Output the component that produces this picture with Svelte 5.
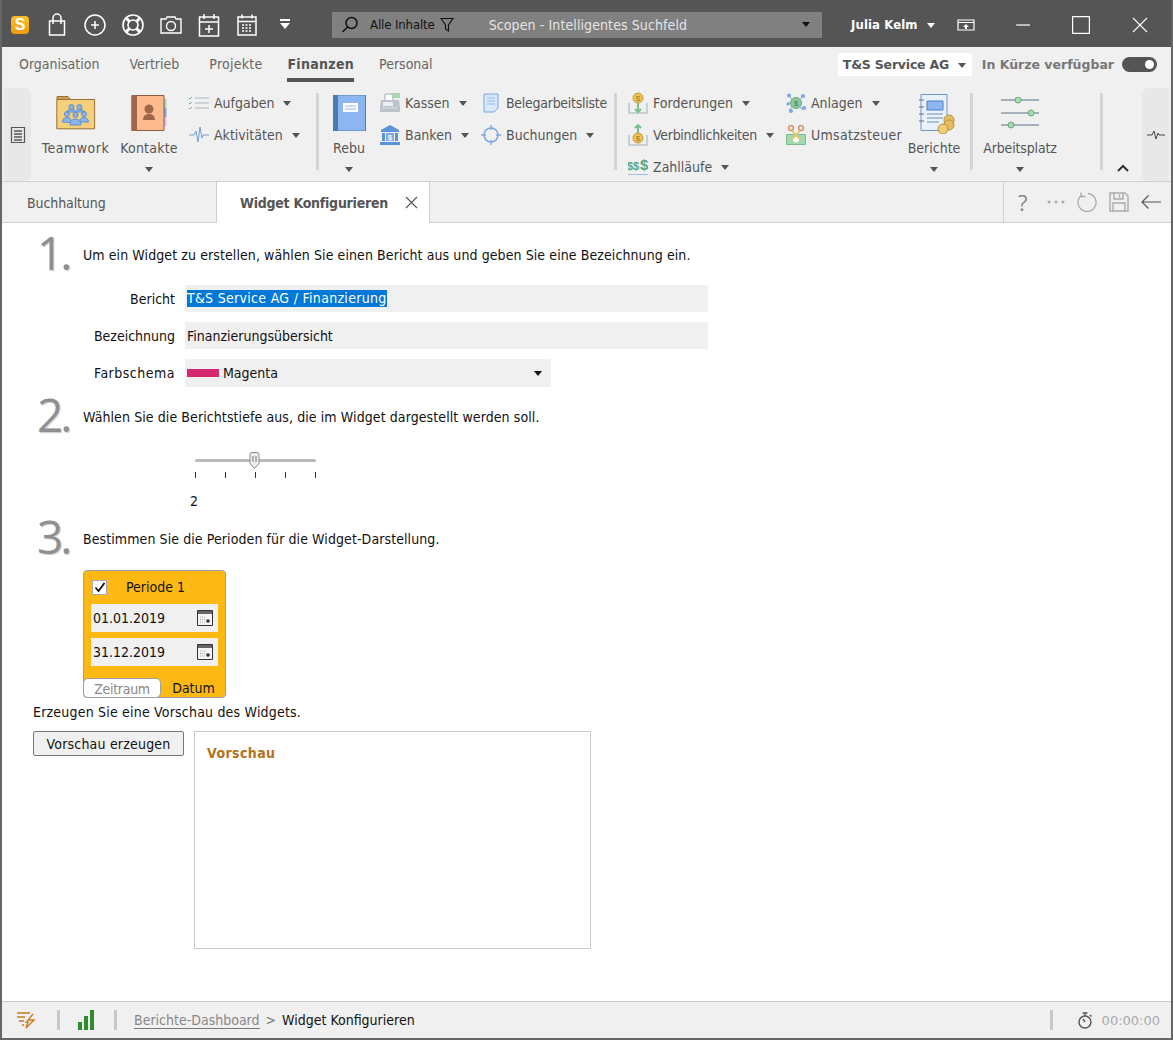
<script>
  const tabs = ['Organisation', 'Vertrieb', 'Projekte', 'Finanzen', 'Personal'];
  const ticks = [0, 1, 2, 3, 4];
  let periodeAktiv = $state(true);
</script>

<div class="window">
  <header class="titlebar">
    <div class="logo">S</div>
    <div class="quick">
      <svg width="24" height="24" viewBox="0 0 24 24" fill="none" stroke="#fff" stroke-width="1.5"><path d="M4.5 8h15v14h-15z"/><path d="M8 11V5a4 4 0 0 1 8 0v6"/></svg>
      <svg width="24" height="24" viewBox="0 0 24 24" fill="none" stroke="#fff" stroke-width="1.5"><circle cx="12" cy="12" r="10"/><path d="M8 12h8M12 8v8"/></svg>
      <svg width="24" height="24" viewBox="0 0 24 24" fill="none" stroke="#fff" stroke-width="1.6"><circle cx="12" cy="12" r="10"/><circle cx="12" cy="12" r="5"/><path d="M5 5l3.5 3.5M19 5l-3.5 3.5M5 19l3.5-3.5M19 19l-3.5-3.5" stroke-width="3"/></svg>
      <svg width="24" height="24" viewBox="0 0 24 24" fill="none" stroke="#fff" stroke-width="1.4"><path d="M2 6h5l1-2h8l1 2h5v14H2z"/><circle cx="12" cy="13" r="4.5"/></svg>
      <svg width="24" height="24" viewBox="0 0 24 24" fill="none" stroke="#fff" stroke-width="1.5"><path d="M2.5 4h19v19h-19zM2.5 9h19M7 1v5M17 1v5M12 12v8M8 16h8"/></svg>
      <svg width="24" height="24" viewBox="0 0 24 24" fill="none" stroke="#fff" stroke-width="1.5"><path d="M3 4h18v18H3zM3 8.5h18M7 1.5v4M17 1.5v4"/><path d="M7 12h10M7 15h10M7 18h10" stroke-dasharray="2 1.5" stroke-width="1.3"/></svg>
      <svg width="24" height="24" viewBox="0 0 24 24" fill="#fff"><path d="M7 6h10v2H7zM7 10h10l-5 6z"/></svg>
    </div>
    <div class="search">
      <svg class="lens" width="20" height="20" viewBox="0 0 20 20" fill="none" stroke="#111" stroke-width="1.5"><circle cx="11.5" cy="8" r="5.5"/><path d="M7.5 12l-5 5"/></svg>
      <span class="scope">Alle Inhalte</span>
      <svg class="filter" width="14" height="16" viewBox="0 0 14 16" fill="none" stroke="#111" stroke-width="1.2"><path d="M1 1.5h12L8.5 8v6l-3-2V8z"/></svg>
      <span class="hint">Scopen - Intelligentes Suchfeld</span>
      <span class="caret dark"></span>
    </div>
    <div class="user">Julia Kelm <span class="caret white"></span></div>
    <svg class="screen" width="18" height="12" viewBox="0 0 18 12" fill="none" stroke="#fff" stroke-width="1.2"><path d="M1 1h16v10H1zM1 3.5h16"/><path d="M9 5l-3 3h2v2h2V8h2z" fill="#fff" stroke="none"/></svg>
    <div class="winbtns">
      <svg width="18" height="18" viewBox="0 0 18 18" stroke="#fff" stroke-width="1.2"><path d="M2 9h14"/></svg>
      <svg width="18" height="18" viewBox="0 0 18 18" fill="none" stroke="#fff" stroke-width="1.2"><path d="M.6.6h16.8v16.8H.6z"/></svg>
      <svg width="16" height="16" viewBox="0 0 16 16" stroke="#fff" stroke-width="1.1"><path d="M1 1l14 14M15 1L1 15"/></svg>
    </div>
  </header>

  <nav class="navrow">
    {#each tabs as t}
      <span class="navtab" class:active={t === 'Finanzen'} class:tight={t === 'Projekte'}>{t}</span>
    {/each}
    <div class="navright">
      <div class="company">T&amp;S Service AG <span class="caret gray"></span></div>
      <span class="soon">In Kürze verfügbar</span>
      <div class="switch"><span></span></div>
    </div>
  </nav>

  <section class="ribbon">
    <div class="pane left">
      <svg width="16" height="18" viewBox="0 0 16 18" fill="none" stroke="#555" stroke-width="1.2"><path d="M1.5 1.5h13v15h-13z"/><path d="M4 5h8M4 8h8M4 11h8M4 14h8" stroke-width="1.4"/></svg>
    </div>

    <div class="big teamwork">
      <svg class="bigicon" width="40" height="36" viewBox="0 0 40 36"><path d="M1 4.5V1.5h11l2.5 3z" fill="#c9a050" stroke="#96703a"/><path d="M.8 4.5h37.8v29.3H.8z" fill="#f6cf7b" stroke="#96703a"/><g fill="#8db5ea" stroke="#5d8fd2"><circle cx="15.5" cy="12" r="2.5"/><circle cx="23.5" cy="12" r="2.5"/><circle cx="11" cy="19" r="2.5"/><circle cx="28" cy="19" r="2.5"/><circle cx="19.5" cy="20" r="2.5"/><path d="M11 17c0-2 2-2.500 4.500-2.500s3 .5 4 1.500c1-1 2-1.500 4-1.500s4.500.5 4.500 2.500z"/><path d="M6.500 27c0-3 2-4.500 4.500-4.500s4 1 4 3v2zM24 25.500c0-2 1.500-3 4-3s4.500 1.500 4.500 4.500H24z"/><path d="M14 30c0-4 2.500-6 5.500-6s5.500 2 5.500 6z"/></g></svg>
      <span class="lbl wide">Teamwork</span>
    </div>
    <div class="big kontakte">
      <svg class="bigicon" width="36" height="36" viewBox="0 0 36 36"><rect x="32" y="4" width="3.5" height="9" fill="#a8dcae"/><rect x="32" y="13" width="3.5" height="9" fill="#7aa9e8"/><rect x="32" y="22" width="3.5" height="9" fill="#d9c4e8"/><path d="M1 .5h32v35H1z" fill="#fdbb8f" stroke="#8f5c3e"/><path d="M.5 0H6v36H.5z" fill="#a0664a"/><circle cx="18" cy="14" r="4.5" fill="#a0664a"/><path d="M12 25c0-4.500 3-6 6-6s6 1.500 6 6z" fill="#a0664a"/></svg>
      <span class="lbl">Kontakte</span>
      <span class="caret gray down"></span>
    </div>

    <div class="col aufgaben">
      <div class="item"><svg width="20" height="14" viewBox="0 0 20 14" fill="none"><path d="M6 2h14M6 7h14M6 12h14" stroke="#a9b6c4"/><path d="M0 2l1 1 2-2M0 7l1 1 2-2M0 12l1 1 2-2" stroke="#6fbb85"/></svg>Aufgaben <span class="caret gray"></span></div>
      <div class="item"><svg width="20" height="18" viewBox="0 0 20 18" fill="none" stroke="#6f9fd8"><path d="M0 9h5l2-4 2 11 2-15 2 11 1-3h6"/></svg>Aktivitäten <span class="caret gray"></span></div>
    </div>
    <div class="sep"></div>

    <div class="big rebu">
      <svg class="bigicon" width="33" height="36" viewBox="0 0 33 36"><path d="M.5 0h32v36H.5z" fill="#8cb6ef"/><path d="M.5 0h32v36H.5z" fill="none" stroke="#4d7fbd"/><path d="M0 0h5v36H0z" fill="#4a7ab8"/><path d="M10 8h15v9H10z" fill="#fff"/><path d="M12 11h11M12 14h11" stroke="#8cb6ef"/></svg>
      <span class="lbl">Rebu</span>
      <span class="caret gray down"></span>
    </div>
    <div class="col kassen">
      <div class="item"><svg width="20" height="20" viewBox="0 0 20 20"><path d="M5 1h8v9H5z" fill="#fff" stroke="#9ab"/><path d="M12 0h8v5h-8z" fill="#a6d8b0"/><path d="M1 7h18l1 7v5H0v-5z" fill="#bcc3cb"/><path d="M3 9h10v4H3z" fill="#eceff3"/><path d="M3 15h14" stroke="#eef0f3" stroke-dasharray="2 1"/></svg>Kassen <span class="caret gray"></span></div>
      <div class="item"><svg width="20" height="20" viewBox="0 0 20 20" fill="#5b93d8"><path d="M10 0l9 5v2H1V5z"/><path d="M0 17h20v3H0zM2 8h3v8H2zM15 8h3v8h-3z"/><path d="M6 8h8v8H6z" fill="#7aaae8"/><text x="10" y="15" font-size="8" font-family="Liberation Sans" font-weight="700" text-anchor="middle" fill="#fff">$</text></svg>Banken <span class="caret gray"></span></div>
    </div>
    <div class="col beleg">
      <div class="item"><svg width="16" height="20" viewBox="0 0 16 20" fill="#d8e8fa" stroke="#79a6dc"><path d="M1 1h14v14l-4 4H1z"/><path d="M4 5h8M4 8h8M4 11h8" stroke="#9bbce4"/></svg><span class="narrow">Belegarbeitsliste</span></div>
      <div class="item"><svg width="20" height="20" viewBox="0 0 20 20" fill="none" stroke="#7aa6dc" stroke-width="1.5"><circle cx="10" cy="10" r="7"/><path d="M10 0v5M10 15v5M0 10h5M15 10h5" stroke-width="1.3"/></svg>Buchungen <span class="caret gray"></span></div>
    </div>
    <div class="sep"></div>

    <div class="col three">
      <div class="item"><svg width="20" height="22" viewBox="0 0 20 22" fill="none"><path d="M1 11v10h18V11" stroke="#9db0be"/><path d="M10 11v9m-3-3l3 3 3-3" stroke="#7cc08d" stroke-width="2"/><circle cx="10" cy="6" r="5" fill="#f2c255" stroke="#c49a3a"/><text x="10" y="9" font-size="8" font-family="Liberation Sans" text-anchor="middle" fill="#a87a20">$</text></svg>Forderungen <span class="caret gray"></span></div>
      <div class="item"><svg width="20" height="22" viewBox="0 0 20 22" fill="none"><path d="M1 11v10h18V11" stroke="#9db0be"/><path d="M10 10V1M7 4l3-3 3 3" stroke="#7cc08d" stroke-width="2"/><circle cx="10" cy="14" r="5" fill="#f2c255" stroke="#c49a3a"/><text x="10" y="17" font-size="8" font-family="Liberation Sans" text-anchor="middle" fill="#a87a20">$</text></svg><span class="narrow">Verbindlichkeiten</span> <span class="caret gray"></span></div>
      <div class="item"><svg width="20" height="20" viewBox="0 0 20 20"><text x="-1" y="13" font-size="11" font-family="Liberation Sans" font-weight="700" fill="#5da57a">$$</text><text x="12" y="13" font-size="15" font-family="Liberation Sans" font-weight="700" fill="#5da57a">$</text><path d="M0 17.5h20" stroke="#9cc0e4"/></svg>Zahlläufe <span class="caret gray"></span></div>
    </div>
    <div class="col anlagen">
      <div class="item"><svg width="20" height="20" viewBox="0 0 20 20" fill="#7aa6e8"><path d="M3 3l14 14M17 3L3 17M1 10h6" stroke="#90a8c0"/><circle cx="3" cy="2.5" r="2"/><circle cx="17" cy="3" r="2"/><circle cx="2" cy="11" r="1.5"/><circle cx="5" cy="18" r="2"/><circle cx="18" cy="15" r="2"/><circle cx="10" cy="10" r="5.5" fill="#8ec9a0" stroke="#6aa87f"/><text x="10" y="13" font-size="8" font-family="Liberation Sans" text-anchor="middle" fill="#3f7d55">$</text></svg>Anlagen <span class="caret gray"></span></div>
      <div class="item"><svg width="20" height="20" viewBox="0 0 20 20" fill="none"><path d="M.5 9.5h19v10H.5z" fill="#a3d9ae" stroke="#7fbb8c"/><circle cx="10" cy="14.5" r="3" fill="#fff"/><path d="M5.500 5l9 10M14.500 5l-9 10" stroke="#e8c56c" stroke-width="1.8"/><circle cx="5" cy="3" r="2.4" stroke="#d9906a" stroke-width="1.5"/><circle cx="15" cy="3" r="2.4" stroke="#d9906a" stroke-width="1.5"/></svg><span class="loose">Umsatzsteuer</span></div>
    </div>
    <div class="big berichte">
      <svg class="bigicon" width="36" height="40" viewBox="0 0 36 40"><path d="M2 .5h26v36H2z" fill="#e9f2fc" stroke="#6d97c8"/><path d="M0 6h5M0 13h5M0 20h5M0 27h5" stroke="#5b6e85"/><path d="M8 7h16v9H8z" fill="#8cb6ef" stroke="#4d7fbd"/><path d="M8 20h16M8 24h16M8 28h12" stroke="#6f8aa8"/><circle cx="30" cy="26" r="5" fill="#e4bd62" stroke="#b99340"/><circle cx="30" cy="31" r="5" fill="#e4bd62" stroke="#b99340"/><circle cx="24" cy="35" r="5" fill="#f0cc72" stroke="#b99340"/></svg>
      <span class="lbl">Berichte</span>
      <span class="caret gray down"></span>
    </div>
    <div class="sep after-berichte"></div>

    <div class="big arbeit">
      <svg class="bigicon" width="38" height="34" viewBox="0 0 38 34" fill="#a3dcae" stroke="#6aa878"><path d="M0 3h38M0 16h38M0 28h38" stroke="#5d6f85"/><circle cx="17" cy="3" r="3"/><circle cx="30" cy="16" r="3"/><circle cx="10" cy="28" r="3"/></svg>
      <span class="lbl">Arbeitsplatz</span>
      <span class="caret gray down"></span>
    </div>
    <div class="sep last"></div>
    <svg class="chev" width="12" height="8" viewBox="0 0 12 8" fill="none" stroke="#333" stroke-width="2"><path d="M1 7l5-5 5 5"/></svg>
    <div class="pane right">
      <svg width="18" height="10" viewBox="0 0 18 10" fill="none" stroke="#444"><path d="M0 5h5l2 -4 2 8 2-6 1 2h6"/></svg>
    </div>
  </section>

  <div class="subtabs">
    <div class="subtab">Buchhaltung</div>
    <div class="subtab current"><span>Widget Konfigurieren</span>
      <svg width="13" height="13" viewBox="0 0 13 13" stroke="#555" stroke-width="1.1"><path d="M1 1l11 11M12 1L1 12"/></svg>
    </div>
    <div class="tools">
      <span class="help">?</span>
      <svg width="18" height="4" viewBox="0 0 18 4" fill="#aaa"><circle cx="2" cy="2" r="1.5"/><circle cx="9" cy="2" r="1.5"/><circle cx="16" cy="2" r="1.5"/></svg>
      <svg width="20" height="20" viewBox="0 0 20 20" fill="none" stroke="#aaa" stroke-width="1.3"><path d="M5 3a9 9 0 1 0 6-1.5M4 .5v4h4.5"/></svg>
      <svg width="20" height="20" viewBox="0 0 20 20" fill="none" stroke="#aaa" stroke-width="1.4"><path d="M1 1h15l3 3v15H1zM5 1v6h9V1M4 19v-8h12v8"/><path d="M10.5 2.5v3"/></svg>
      <svg width="20" height="14" viewBox="0 0 20 14" fill="none" stroke="#555" stroke-width="1.2"><path d="M20 7H1M7.5.5L1 7l6.5 6.5"/></svg>
    </div>
  </div>

  <main class="content">
    <div class="step first">
      <span class="num">1.</span>
      <p>Um ein Widget zu erstellen, wählen Sie einen Bericht aus und geben Sie eine Bezeichnung ein.</p>
    </div>
    <div class="form">
      <label for="bericht">Bericht</label>
      <div id="bericht" class="field"><span class="selected">T&amp;S Service AG / Finanzierung</span></div>
      <label for="bez">Bezeichnung</label>
      <div id="bez" class="field">Finanzierungsübersicht</div>
      <label for="farbe" class="farbe">Farbschema</label>
      <div id="farbe" class="field short"><span class="swatch"></span>Magenta<span class="caret dark end"></span></div>
    </div>

    <div class="step second">
      <span class="num">2.</span>
      <p>Wählen Sie die Berichtstiefe aus, die im Widget dargestellt werden soll.</p>
    </div>
    <div class="slider">
      <div class="track">
        <svg class="thumb" width="11" height="17" viewBox="0 0 11 17"><path d="M1 2.5Q1 .5 3 .5h5q2 0 2 2v9l-4.500 5L1 11.500z" fill="#eee" stroke="#8a8a8a"/><path d="M4 4v6M7 4v6" stroke="#777"/></svg>
      </div>
      <div class="ticks">{#each ticks as t}<i></i>{/each}</div>
      <div class="depth">2</div>
    </div>

    <div class="step third">
      <span class="num">3.</span>
      <p>Bestimmen Sie die Perioden für die Widget-Darstellung.</p>
    </div>
    <div class="period">
      <div class="phead">
        <button class="check" aria-label="Periode aktiv" onclick={() => (periodeAktiv = !periodeAktiv)}>
          {#if periodeAktiv}<svg width="12" height="11" viewBox="0 0 12 11" fill="none" stroke="#111" stroke-width="1.8"><path d="M1.5 5.5l3 3.500 6-8"/></svg>{/if}
        </button>
        <span>Periode 1</span>
      </div>
      <div class="date">01.01.2019
        <svg width="16" height="16" viewBox="0 0 16 16"><path d="M.5.5h15v15H.5z" fill="#f4f4f4" stroke="#333"/><path d="M1 1h14v3H1z" fill="#666"/><path d="M3 7h6M3 9.5h6M3 12h6" stroke="#aaa" stroke-dasharray="1 1"/><circle cx="11" cy="11" r="1.8" fill="#333"/></svg>
      </div>
      <div class="date">31.12.2019
        <svg width="16" height="16" viewBox="0 0 16 16"><path d="M.5.5h15v15H.5z" fill="#f4f4f4" stroke="#333"/><path d="M1 1h14v3H1z" fill="#666"/><path d="M3 7h6M3 9.5h6M3 12h6" stroke="#aaa" stroke-dasharray="1 1"/><circle cx="11" cy="11" r="1.8" fill="#333"/></svg>
      </div>
      <div class="ptabs">
        <span class="ptab off">Zeitraum</span>
        <span class="ptab on">Datum</span>
      </div>
    </div>

    <p class="hintline">Erzeugen Sie eine Vorschau des Widgets.</p>
    <div class="previewrow">
      <button class="pbtn">Vorschau erzeugen</button>
      <div class="preview"><h3>Vorschau</h3></div>
    </div>
  </main>

  <footer class="status">
    <svg class="bolt" width="20" height="20" viewBox="0 0 20 20" fill="none" stroke="#c9791f" stroke-width="1.4"><path d="M1 3h13M1 7h8M3 11h5M6 15h2"/><path d="M17 4l-5 6h6l-8 8 2-6H9"/></svg>
    <div class="ssep"></div>
    <svg class="bars" width="18" height="20" viewBox="0 0 18 20" fill="#2e8b2e"><path d="M1 12h4v8H1zM7 6h4v14H7zM13 0h4v20h-4z"/></svg>
    <div class="ssep"></div>
    <span class="crumb">Berichte-Dashboard</span>
    <span class="gt">&gt;</span>
    <span class="here">Widget Konfigurieren</span>
    <div class="ssep timer"></div>
    <svg class="watch" width="16" height="17" viewBox="0 0 16 17" fill="none" stroke="#555" stroke-width="1.4"><circle cx="8" cy="10" r="6"/><path d="M5.5 1h5M8 1v3M13 3l1.5 1.5M8 10l-2-3"/></svg>
    <span class="clock">00:00:00</span>
  </footer>
</div>

<style>
  :global(body) {
    margin: 0;
    background: #fff;
  }

  .window {
    width: 1173px;
    height: 1040px;
    box-sizing: border-box;
    display: flex;
    flex-direction: column;
    overflow: hidden;
    border: solid #666;
    border-width: 0 2px 2px 2px;
    font-family: "DejaVu Sans", sans-serif;
    font-stretch: condensed;
    font-size: 14px;
    color: #111;
  }

  p { margin: 0; }

  .narrow { letter-spacing: -0.27px; }
  .loose { letter-spacing: 0.3px; }

  /* carets */
  .caret {
    display: inline-block;
    width: 0;
    height: 0;
    border-left: 4.5px solid transparent;
    border-right: 4.5px solid transparent;
    border-top: 5px solid #555;
    vertical-align: middle;
    margin-left: 5px;
  }
  .caret.dark { border-top-color: #111; }
  .caret.white { border-top-color: #fff; }
  .caret.gray { border-top-color: #555; }

  /* title bar */
  .titlebar {
    height: 47px;
    box-sizing: border-box;
    padding-top: 2px;
    flex: none;
    margin: 0 -2px;
    background: #555;
    display: flex;
    align-items: center;
    color: #fff;
  }
  .logo {
    width: 18px;
    height: 18px;
    margin-left: 11px;
    border-radius: 4px;
    background: linear-gradient(#ffc02a, #f29a0a);
    color: #fff;
    font: 700 16px/18px "Liberation Sans", sans-serif;
    text-align: center;
  }
  .quick {
    display: flex;
    gap: 14px;
    margin-left: 16px;
    width: 274px;
  }
  .search {
    width: 490px;
    height: 26px;
    margin-left: 13px;
    background: #808080;
    display: flex;
    align-items: center;
    color: #111;
    flex: none;
  }
  .lens { margin-left: 8px; }
  .scope { margin-left: 10px; font-size: 13px; letter-spacing: -0.1px; }
  .filter { margin-left: 5px; }
  .hint { margin-left: 35px; color: #e4e4e4; letter-spacing: 0.1px; }
  .search .caret { margin-left: auto; margin-right: 12px; }
  .user {
    margin-left: 29px;
    font-weight: 700;
    font-size: 13px;
    width: 88px;
    white-space: nowrap;
    letter-spacing: 0.1px;
  }
  .screen { margin-left: 18px; }
  .winbtns {
    display: flex;
    align-items: center;
    gap: 40px;
    margin-left: 39px;
  }
  .winbtns svg:last-child { margin-left: 2px; }

  /* nav row */
  .navrow {
    height: 38px;
    flex: none;
    background: #f0f0f0;
    display: flex;
    align-items: flex-start;
    padding-left: 17px;
    color: #666;
  }
  .navtab {
    margin-top: 8px;
    margin-right: 30px;
    padding-bottom: 5px;
    line-height: 18px;
    border-bottom: 4px solid transparent;
  }
  .navtab.tight { margin-right: 25px; letter-spacing: 0.25px; }
  .navtab.active {
    font-weight: 700;
    color: #555;
    border-bottom-color: #555;
    margin-right: 25px;
    letter-spacing: 0.3px;
  }
  .navright {
    margin-left: auto;
    display: flex;
    align-items: center;
    margin-top: 6px;
    margin-right: 14px;
    font-weight: 700;
    font-stretch: normal;
    font-size: 12.5px;
  }
  .company {
    width: 134px;
    height: 23px;
    box-sizing: border-box;
    padding-left: 5px;
    line-height: 23px;
    background: #fff;
    color: #555;
    white-space: nowrap;
    letter-spacing: -0.2px;
  }
  .soon { margin-left: 10px; color: #777; }
  .switch {
    width: 35px;
    height: 15px;
    margin-left: 8px;
    border-radius: 8px;
    background: #555;
    position: relative;
  }
  .switch span {
    position: absolute;
    right: 3px;
    top: 3px;
    width: 9px;
    height: 9px;
    border-radius: 50%;
    background: #fff;
  }

  /* ribbon */
  .ribbon {
    height: 96px;
    flex: none;
    background: #f0f0f0;
    border-bottom: 1px solid #d0d0d0;
    display: flex;
    align-items: flex-start;
    color: #555;
  }
  .pane {
    width: 27px;
    height: 93px;
    margin-top: 3px;
    background: #e8e8e8;
    display: flex;
    align-items: center;
    justify-content: center;
    flex: none;
  }
  .pane.left { margin-left: 2px; border-radius: 0 6px 6px 0; }
  .pane.right { margin-left: 13px; border-radius: 6px 0 0 6px; }
  .big {
    flex: none;
    display: flex;
    flex-direction: column;
    align-items: center;
    height: 96px;
    position: relative;
  }
  .teamwork { width: 71px; margin-left: 9px; }
  .kontakte { width: 58px; margin-left: 9px; }
  .kontakte .lbl { letter-spacing: 0.2px; }
  .rebu { width: 34px; margin-left: 13px; }
  .berichte { width: 52px; }
  .arbeit { width: 74px; margin-left: 10px; }
  .bigicon {
    position: absolute;
    bottom: 50px;
  }
  .berichte .bigicon { transform: translate(3px, 3px); }
  .lbl {
    position: absolute;
    top: 55px;
    white-space: nowrap;
  }
  .lbl.wide { letter-spacing: 0.5px; }
  .arbeit .lbl { letter-spacing: -0.15px; }
  .big .caret {
    position: absolute;
    top: 82px;
    margin: 0;
  }
  .col {
    flex: none;
    display: flex;
    flex-direction: column;
    gap: 8px;
    padding-top: 6px;
  }
  .aufgaben { width: 127px; margin-left: 11px; }
  .kassen { width: 101px; margin-left: 14px; }
  .beleg { width: 133px; }
  .three { width: 158px; margin-left: 11px; }
  .anlagen { width: 122px; }
  .item {
    height: 24px;
    display: flex;
    align-items: center;
    gap: 5px;
    white-space: nowrap;
  }
  .item svg { width: 20px; flex: none; }
  .item .caret { margin-left: 4px; }
  .sep {
    width: 3px;
    height: 77px;
    margin-top: 8px;
    background: #d4d4d4;
    flex: none;
  }
  .sep.after-berichte { margin-left: 10px; }
  .sep.last { margin-left: 43px; }
  .chev { margin: 79px 0 0 14px; flex: none; }

  /* sub tabs */
  .subtabs {
    height: 40px;
    flex: none;
    display: flex;
    background: #f0f0f0;
    border-bottom: 1px solid #d0d0d0;
    color: #555;
  }
  .subtab {
    width: 214px;
    box-sizing: border-box;
    padding-left: 25px;
    line-height: 43px;
    letter-spacing: -0.1px;
  }
  .subtab.current {
    background: #fff;
    width: 214px;
    height: 41px;
    padding-left: 23px;
    font-weight: 700;
    border: solid #d0d0d0;
    border-width: 0 1px;
    display: flex;
    align-items: center;
    gap: 17px;
    white-space: nowrap;
  }
  .current span { letter-spacing: -0.25px; margin-top: 1px; }
  .tools {
    margin-left: auto;
    width: 168px;
    box-sizing: border-box;
    border-left: 1px solid #d0d0d0;
    display: flex;
    align-items: center;
    gap: 12px;
    padding-left: 14px;
  }
  .help {
    width: 11px;
    margin-right: 6px;
    font: 400 22px/1 "Open Sans", sans-serif;
    color: #888;
  }

  /* content */
  .content {
    flex: 1;
    background: #fff;
    padding-left: 31px;
  }
  .step {
    display: flex;
    align-items: flex-start;
  }
  .num {
    width: 50px;
    flex: none;
    padding-left: 4px;
    box-sizing: border-box;
    font: 400 46px/46px "Open Sans", sans-serif;
    letter-spacing: -3px;
    color: #8f8f8f;
    text-shadow: 1px 1px 1px #ccc;
  }
  .step p { padding-top: 17px; line-height: 18px; letter-spacing: 0.09px; }
  .step.first { padding-top: 6px; }
  .form {
    display: grid;
    grid-template-columns: 142px 523px;
    column-gap: 10px;
    row-gap: 10px;
    margin-top: 10px;
    align-items: center;
  }
  .form label { text-align: right; }
  .form label.farbe { letter-spacing: 0.5px; }
  .field {
    height: 27px;
    background: #f0f0f0;
    padding-left: 2px;
    display: flex;
    align-items: center;
  }
  .field.short { width: 366px; height: 28px; box-sizing: border-box; }
  .selected { background: #0078d7; color: #fff; line-height: 17px; letter-spacing: 0.3px; }
  .swatch { width: 32px; height: 8px; background: #d6286e; margin-right: 4px; }
  .caret.end { margin-left: auto; margin-right: 9px; }
  .step.second { margin-top: 4px; }
  .slider {
    margin: 22px 0 0 162px;
    width: 121px;
  }
  .track {
    height: 3px;
    margin-top: 13px;
    background: #bbb;
    border-radius: 2px;
    position: relative;
  }
  .thumb { position: absolute; left: 54px; top: -7px; }
  .ticks {
    display: flex;
    justify-content: space-between;
    margin-top: 10px;
  }
  .ticks i { width: 1px; height: 6px; background: #333; }
  .depth { margin: 14px 0 0 -5px; line-height: 18px; }
  .step.third { margin-top: 3px; }
  .period {
    width: 143px;
    height: 128px;
    margin: 11px 0 0 50px;
    box-sizing: border-box;
    background: #fdb913;
    border: 1px solid #a0a0a0;
    border-radius: 4px;
    position: relative;
    padding: 7px;
  }
  .phead { display: flex; align-items: center; height: 18px; gap: 19px; margin-left: 1px; }
  .check {
    width: 15px;
    height: 15px;
    padding: 0;
    background: #fff;
    border: 1px solid #aaa;
    display: flex;
    align-items: center;
    justify-content: center;
  }
  .date {
    height: 28px;
    margin-top: 6px;
    background: #f0f0f0;
    display: flex;
    align-items: center;
    justify-content: space-between;
    padding: 0 5px 0 2px;
  }
  .phead + .date { margin-top: 8px; }
  .ptabs {
    position: absolute;
    left: -1px;
    right: -1px;
    bottom: -1px;
    display: flex;
    height: 20px;
    line-height: 20px;
  }
  .ptab { text-align: center; }
  .ptab.off {
    width: 78px;
    background: #fff;
    color: #888;
    border: 1px solid #a0a0a0;
    border-radius: 5px;
    box-sizing: border-box;
    letter-spacing: -0.3px;
  }
  .ptab.on { flex: 1; }
  .hintline { line-height: 18px; margin-top: 5px; letter-spacing: 0.2px; }
  .previewrow { display: flex; align-items: flex-start; margin-top: 10px; gap: 10px; }
  .pbtn {
    width: 151px;
    height: 25px;
    padding: 0;
    background: #f0f0f0;
    border: 1px solid #777;
    border-radius: 2px;
    font: inherit;
    color: #111;
    letter-spacing: 0.2px;
  }
  .preview {
    width: 397px;
    height: 218px;
    box-sizing: border-box;
    border: 1px solid #ccc;
    padding: 12px;
  }
  .preview h3 {
    margin: 0;
    font-size: 14px;
    line-height: 18px;
    color: #b5721a;
    letter-spacing: 0.4px;
  }

  /* status */
  .status {
    height: 36px;
    flex: none;
    border-top: 1px solid #c8c8c8;
    background: #f0f0f0;
    display: flex;
    align-items: center;
  }
  .bolt { margin-left: 14px; }
  .ssep { width: 3px; height: 20px; background: #c8c8c8; }
  .bolt + .ssep { margin-left: 21px; }
  .bars { margin-left: 17px; margin-right: 19px; }
  .crumb {
    margin-left: 17px;
    color: #888;
    border-bottom: 1px solid #777;
  }
  .gt { color: #777; margin: 0 6px; }
  .ssep.timer { margin-left: auto; }
  .watch { margin-left: 24px; }
  .clock { margin: 0 11px 0 9px; color: #aaa; font-size: 13px; font-stretch: normal; }
</style>
